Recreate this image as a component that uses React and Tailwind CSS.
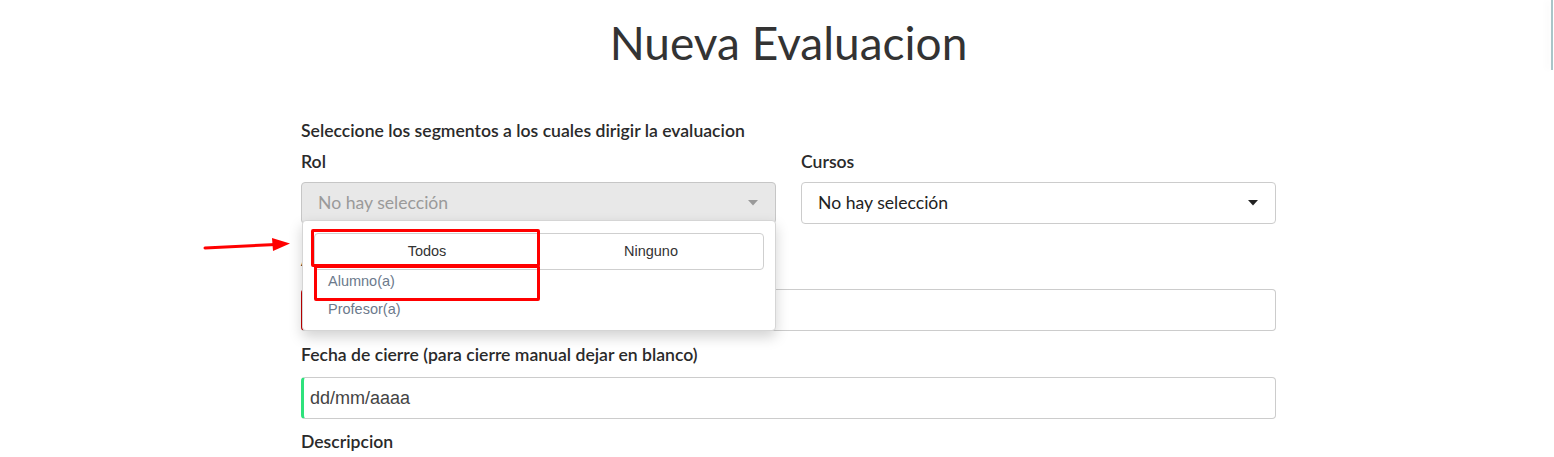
import React from "react";

function Caret({ color }) {
  return (
    <svg width="10" height="6" viewBox="0 0 10 6" className="shrink-0">
      <path d="M0 0 L10 0 L5 5.5 Z" fill={color} />
    </svg>
  );
}

export default function App() {
  return (
    <div className="relative w-[1554px] h-[457px] overflow-hidden bg-white" style={{ fontFamily: "Lato, 'Noto Sans', sans-serif" }}>
      {/* right scrollbar hint */}
      <div className="absolute right-[1px] top-0 h-[70px] w-[2px] bg-[#a9c5c8] shadow-[-4px_0_6px_rgba(0,0,0,0.05)]" />

      <div className="ml-[301px] w-[975px]">
        <h1 className="text-center text-[46px] leading-[55px] pt-[15px] text-[#333333] font-normal">
          Nueva Evaluacion
        </h1>

        <div className="mt-[49px] text-[17.6px] leading-[24px] font-semibold text-[#2a2a2a]">
          Seleccione los segmentos a los cuales dirigir la evaluacion
        </div>

        <div className="mt-[7px] flex gap-[25px]">
          {/* Rol */}
          <div className="relative w-[475px]">
            <div className="text-[17.6px] leading-[24px] font-semibold text-[#2a2a2a]">Rol</div>
            <div className="mt-[8px] h-[42px] rounded-[4px] border border-[#c6c6c6] bg-[#e8e8e8] flex items-center justify-between pl-[16px] pr-[17px]">
              <span className="text-[17.6px] text-[#9a9a9a]">No hay selección</span>
              <Caret color="#9a9a9a" />
            </div>

            {/* dropdown menu */}
            <div className="absolute left-[1px] right-0 top-[70px] z-20 h-[111px] rounded-[4px] border border-[#d5d5d5] bg-white shadow-[0_6px_14px_rgba(0,0,0,0.18)]" style={{ fontFamily: "'Liberation Sans', Arial, sans-serif" }}>
              <div className="mx-[11px] mt-[12px] flex h-[37px] rounded-[4px] border border-[#cfcfcf]">
                <div className="flex-1 flex items-center justify-center text-[14.5px] text-[#333]">Todos</div>
                <div className="flex-1 flex items-center justify-center text-[14.5px] text-[#333]">Ninguno</div>
              </div>
              <div className="pl-[25px] mt-[-3px] text-[14.5px] leading-[28px] text-[#6c7a8c]">
                <div>Alumno(a)</div>
                <div>Profesor(a)</div>
              </div>
            </div>

            {/* annotation boxes */}
            <div className="absolute z-30 left-[10px] top-[79px] w-[229px] h-[38px] border-[3px] border-[#ff0000] rounded-[2px]" />
            <div className="absolute z-30 left-[13px] top-[115px] w-[226px] h-[36px] border-[3px] border-[#ff0000] rounded-[2px]" />
          </div>

          {/* Cursos */}
          <div className="w-[475px]">
            <div className="text-[17.6px] leading-[24px] font-semibold text-[#2a2a2a]">Cursos</div>
            <div className="mt-[8px] h-[42px] rounded-[4px] border border-[#cccccc] bg-white flex items-center justify-between pl-[16px] pr-[17px]">
              <span className="text-[17.6px] text-[#222]">No hay selección</span>
              <Caret color="#222" />
            </div>
          </div>
        </div>

        <div className="mt-[24px] text-[17.6px] leading-[24px] font-semibold text-[#2a2a2a]">Asignaturas</div>
        <div className="mt-[17px] h-[42px] rounded-[4px] border border-[#cccccc] border-l-[2px] border-l-[#c40000] bg-white" />

        <div className="mt-[12px] text-[17.6px] leading-[24px] font-semibold text-[#2a2a2a]">
          Fecha de cierre (para cierre manual dejar en blanco)
        </div>
        <div className="mt-[10px] h-[42px] rounded-[4px] border border-[#cccccc] border-l-[3px] border-l-[#2ee27c] bg-white flex items-center pl-[6px]">
          <span className="text-[18px] text-[#444]" style={{ fontFamily: "'Liberation Sans', Arial, sans-serif" }}>dd/mm/aaaa</span>
        </div>

        <div className="mt-[11px] text-[17.6px] leading-[24px] font-semibold text-[#2a2a2a]">Descripcion</div>
      </div>

      {/* arrow annotation */}
      <svg className="absolute left-[200px] top-[234px] z-30" width="95" height="22" viewBox="0 0 95 22">
        <line x1="5" y1="14" x2="76" y2="10.5" stroke="#ff0000" strokeWidth="3" strokeLinecap="round" />
        <path d="M72 4 L90 9.5 L73 17 Z" fill="#ff0000" />
      </svg>
    </div>
  );
}
